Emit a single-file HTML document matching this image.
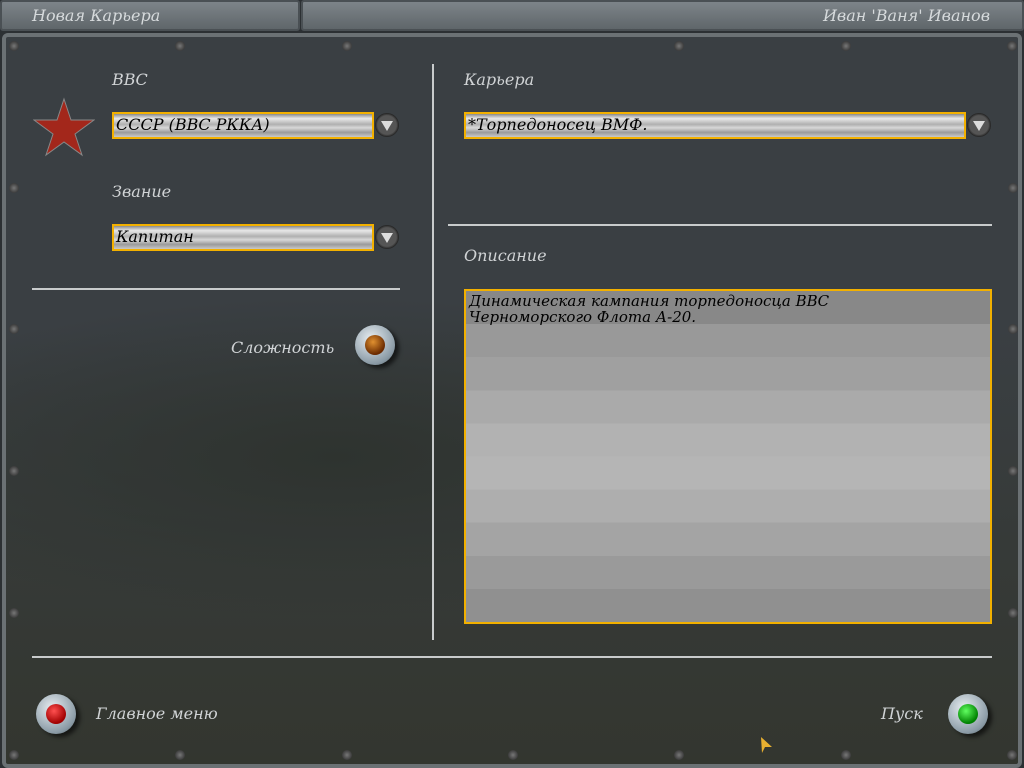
<!DOCTYPE html>
<html><head><meta charset="utf-8"><style>
*{margin:0;padding:0;box-sizing:border-box}
body{width:1024px;height:768px;overflow:hidden;background:#2c3033;position:relative;font-family:"DejaVu Serif","Liberation Serif","Noto Serif CJK SC",serif;font-style:italic}
.tab{position:absolute;top:0;height:31px;background:linear-gradient(#7d8489,#5f666a);border:2px solid #4a5054;border-radius:3px;color:#d6dadc;font-size:16px;line-height:28px}
.panel{position:absolute;left:2px;top:33px;width:1020px;height:735px;border:4px solid #6b7174;border-radius:6px;background:radial-gradient(ellipse 500px 160px at 330px 420px,#2e332f 0%,rgba(0,0,0,0) 100%),linear-gradient(#3a3f43 0%,#3a3f43 40%,#363a38 70%,#33362f 100%)}
.lbl{position:absolute;color:#d0d3d5;font-size:16px}
.field{position:absolute;height:27px;border:2px solid #f2b000;background:linear-gradient(#8a8a8a,#e8e8e8 20%,#b0b0b0 45%,#d8d8d8 60%,#9a9a9a 80%,#c8c8c8);color:#000;font-size:16px;line-height:22px;padding-left:2px}
.dd{position:absolute;width:24px;height:24px;border-radius:50%;background:radial-gradient(#555 55%,#222 70%,#888 80%,#333);}
.dd:after{content:"";position:absolute;left:6px;top:8px;border-left:6px solid transparent;border-right:6px solid transparent;border-top:10px solid #ddd}
.hl{position:absolute;height:2px;background:#c8cbcc}
.vl{position:absolute;width:2px;background:#c8cbcc}
.btn{position:absolute;width:40px;height:40px;border-radius:50%;background:radial-gradient(circle at 40% 35%,#e8eef2,#8a9aa5 70%,#4a555c);box-shadow:4px 3px 4px rgba(0,0,0,.6)}
.btn i{position:absolute;left:10px;top:10px;width:20px;height:20px;border-radius:50%}
.desc{position:absolute;left:464px;top:289px;width:528px;height:335px;border:2px solid #f2b000;background:linear-gradient(#888 0,#888 10%,#999 10%,#999 20%,#a0a0a0 20%,#a0a0a0 30%,#aaa 30%,#aaa 40%,#b2b2b2 40%,#b2b2b2 50%,#b5b5b5 50%,#b5b5b5 60%,#aeaeae 60%,#aeaeae 70%,#a4a4a4 70%,#a4a4a4 80%,#9a9a9a 80%,#9a9a9a 90%,#909090 90%);color:#000;font-size:15px;line-height:16px;padding:2px 3px}
.sc{position:absolute;width:10px;height:10px;border-radius:50%;background:radial-gradient(#777,#222)}
</style></head><body>
<div class="tab" style="left:0;width:300px;padding-left:30px">Новая Карьера</div>
<div class="tab" style="left:301px;width:723px;text-align:right;padding-right:32px">Иван 'Ваня' Иванов</div>
<div class="panel"></div>
<div class="sc" style="left:9px;top:41px"></div><div class="sc" style="left:175px;top:41px"></div><div class="sc" style="left:342px;top:41px"></div><div class="sc" style="left:674px;top:41px"></div><div class="sc" style="left:841px;top:41px"></div><div class="sc" style="left:1007px;top:41px"></div>
<div class="sc" style="left:9px;top:183px"></div><div class="sc" style="left:9px;top:324px"></div><div class="sc" style="left:9px;top:466px"></div><div class="sc" style="left:9px;top:608px"></div>
<div class="sc" style="left:1008px;top:183px"></div><div class="sc" style="left:1008px;top:324px"></div><div class="sc" style="left:1008px;top:466px"></div><div class="sc" style="left:1008px;top:608px"></div>
<div class="sc" style="left:9px;top:750px"></div><div class="sc" style="left:175px;top:750px"></div><div class="sc" style="left:342px;top:750px"></div><div class="sc" style="left:508px;top:750px"></div><div class="sc" style="left:674px;top:750px"></div><div class="sc" style="left:841px;top:750px"></div><div class="sc" style="left:1007px;top:750px"></div>
<div class="lbl" style="left:112px;top:70px">ВВС</div>
<svg style="position:absolute;left:33px;top:97px" width="62" height="60" viewBox="0 0 62 60"><polygon points="31,2 38,23 61,23 42,37 49,58 31,45 13,58 20,37 1,23 24,23" fill="#a3271b" stroke="#888" stroke-width="1"/></svg>
<div class="field" style="left:112px;top:112px;width:262px">СССР (ВВС РККА)</div>
<div class="dd" style="left:375px;top:113px"></div>
<div class="lbl" style="left:112px;top:182px">Звание</div>
<div class="field" style="left:112px;top:224px;width:262px">Капитан</div>
<div class="dd" style="left:375px;top:225px"></div>
<div class="hl" style="left:32px;top:288px;width:368px"></div>
<div class="lbl" style="left:231px;top:338px">Сложность</div>
<div class="btn" style="left:355px;top:325px"><i style="background:radial-gradient(circle at 40% 35%,#e09030,#6a2a00 70%)"></i></div>
<div class="vl" style="left:432px;top:64px;height:576px"></div>
<div class="lbl" style="left:464px;top:70px">Карьера</div>
<div class="field" style="left:464px;top:112px;width:502px">*Торпедоносец ВМФ.</div>
<div class="dd" style="left:967px;top:113px"></div>
<div class="hl" style="left:448px;top:224px;width:544px"></div>
<div class="lbl" style="left:464px;top:246px">Описание</div>
<div class="desc">Динамическая кампания торпедоносца ВВС<br>Черноморского Флота А-20.</div>
<div class="hl" style="left:32px;top:656px;width:960px"></div>
<div class="btn" style="left:36px;top:694px"><i style="background:radial-gradient(circle at 40% 35%,#ff5050,#a00000 70%)"></i></div>
<div class="lbl" style="left:96px;top:704px">Главное меню</div>
<div class="lbl" style="left:881px;top:704px">Пуск</div>
<div class="btn" style="left:948px;top:694px"><i style="background:radial-gradient(circle at 40% 35%,#60ff60,#008000 70%)"></i></div>
<svg style="position:absolute;left:760px;top:736px" width="14" height="18"><polygon points="1,1 12,11 5,11 2,17" fill="#e8b030"/></svg>
</body></html>
